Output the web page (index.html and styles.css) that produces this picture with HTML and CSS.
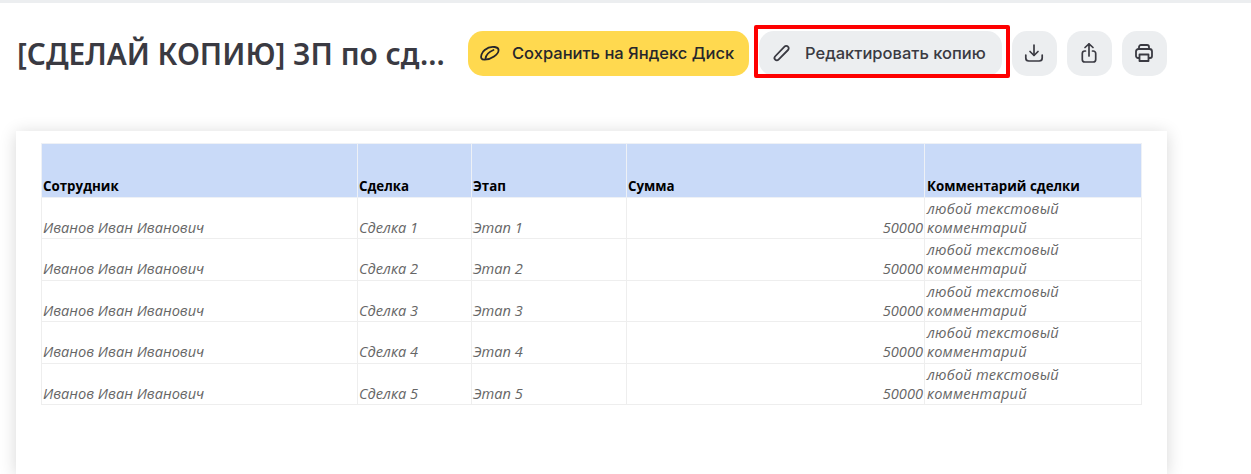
FILE: index.html
```html
<!DOCTYPE html>
<html lang="ru">
<head>
<meta charset="utf-8">
<title>Документ</title>
<link rel="stylesheet" href="styles.css">
</head>
<body>
<div class="topline"></div>
<header class="bar">
  <h1 class="title">[СДЕЛАЙ КОПИЮ] ЗП по сд...</h1>
  <div class="actions">
    <button class="btn btn-yellow">
      <svg class="ico-disk" width="24" height="24" viewBox="0 0 24 24" fill="none" stroke="#26262b" stroke-width="1.8" stroke-linecap="round" stroke-linejoin="round"><path d="M3.500 17.500c-1.200-2 .2-6 3.200-8.500 3-2.500 7-3.500 10-3 2 .3 3.500 1.200 3.800 2.500.4 2-1.500 5-4.500 7-3.200 2.200-7 3.300-9.800 3.200-1.200 0-2.200-.4-2.700-1.200z"/><path d="M7.500 17.500c.5-3 3-6.500 8-8.500"/></svg>
      <span>Сохранить на Яндекс Диск</span>
    </button>
    <button class="btn btn-grey btn-edit">
      <svg width="20" height="20" viewBox="0 0 20 20" fill="none" stroke="#3a3a42" stroke-width="1.8" stroke-linecap="round" stroke-linejoin="round"><path d="M3 13.500 12.500 3.600a2.400 2.400 0 0 1 3.500 0 2.400 2.400 0 0 1 0 3.400L6.500 16.600a2.300 2.300 0 0 1-3.300 0 2.300 2.300 0 0 1-.2-3.100z"/></svg>
      <span>Редактировать копию</span>
    </button>
    <button class="btn btn-grey btn-icon" aria-label="Скачать">
      <svg width="20" height="20" viewBox="0 0 20 20" fill="none" stroke="#3a3a42" stroke-width="1.7" stroke-linecap="round" stroke-linejoin="round"><path d="M10 2v10"/><path d="M6 8.500l4 4 4-4"/><path d="M1.800 12v3a3 3 0 0 0 3 3h10.400a3 3 0 0 0 3-3v-3"/></svg>
    </button>
    <button class="btn btn-grey btn-icon" aria-label="Поделиться">
      <svg width="20" height="22" viewBox="0 0 20 22" fill="none" stroke="#3a3a42" stroke-width="1.7" stroke-linecap="round" stroke-linejoin="round"><path d="M10 14V2"/><path d="M6 5.500 10 1.800l4 3.700"/><path d="M6.500 9H5.800a2.500 2.500 0 0 0-2.500 2.500v6A2.500 2.500 0 0 0 5.800 20h8.400a2.500 2.500 0 0 0 2.500-2.500v-6A2.500 2.500 0 0 0 14.200 9h-.7"/></svg>
    </button>
    <button class="btn btn-grey btn-icon" aria-label="Печать">
      <svg width="20" height="20" viewBox="0 0 20 20" fill="none" stroke="#3a3a42" stroke-width="1.8" stroke-linecap="round" stroke-linejoin="round"><path d="M5 6V4a2 2 0 0 1 2-2h6a2 2 0 0 1 2 2v2"/><path d="M5 15H4a2 2 0 0 1-2-2V8.500A2.500 2.500 0 0 1 4.500 6h11A2.500 2.500 0 0 1 18 8.500V13a2 2 0 0 1-2 2h-1"/><path d="M5.500 11.500h9V18h-9z"/></svg>
    </button>
  </div>
</header>
<main class="sheet">
  <table class="grid">
    <colgroup>
      <col class="c1"><col class="c2"><col class="c3"><col class="c4"><col class="c5">
    </colgroup>
    <thead>
      <tr><th>Сотрудник</th><th>Сделка</th><th>Этап</th><th>Сумма</th><th class="note">Комментарий сделки</th></tr>
    </thead>
    <tbody>
      <tr class="r1"><td>Иванов Иван Иванович</td><td>Сделка 1</td><td>Этап 1</td><td class="num">50000</td><td class="note">любой текстовый комментарий</td></tr>
      <tr class="r2"><td>Иванов Иван Иванович</td><td>Сделка 2</td><td>Этап 2</td><td class="num">50000</td><td class="note">любой текстовый комментарий</td></tr>
      <tr class="r1"><td>Иванов Иван Иванович</td><td>Сделка 3</td><td>Этап 3</td><td class="num">50000</td><td class="note">любой текстовый комментарий</td></tr>
      <tr class="r2"><td>Иванов Иван Иванович</td><td>Сделка 4</td><td>Этап 4</td><td class="num">50000</td><td class="note">любой текстовый комментарий</td></tr>
      <tr class="r1"><td>Иванов Иван Иванович</td><td>Сделка 5</td><td>Этап 5</td><td class="num">50000</td><td class="note">любой текстовый комментарий</td></tr>
    </tbody>
  </table>
</main>
</body>
</html>
```

FILE: styles.css
```css
html, body {
  margin: 0;
  height: 474px;
  overflow: hidden;
  background: #fff;
}
.topline {
  height: 3px;
  background: #eceef0;
}
.bar {
  display: flex;
  align-items: center;
  height: 45px;
  margin-top: 28px;
  padding-left: 17px;
}
.title {
  width: 451px;
  margin: 0;
  font: 600 29.8px/36px "Noto Sans", sans-serif;
  color: #3a3a42;
  white-space: nowrap;
}
.actions {
  display: flex;
  gap: 10px;
}
.btn {
  display: flex;
  align-items: center;
  box-sizing: border-box;
  height: 45px;
  border: 0;
  padding: 0 0 2px;
  border-radius: 15px;
  font: 500 16.5px/20px Inter, "Noto Sans", sans-serif;
  white-space: nowrap;
}
.btn-yellow {
  width: 281px;
  gap: 10px;
  padding-left: 10px;
  background: #ffd94f;
  color: #26262b;
}
.btn-grey {
  background: #eceef0;
  color: #3a3a42;
}
.btn-edit {
  position: relative;
  width: 243px;
  gap: 13px;
  padding-left: 13px;
}
.btn-edit::after {
  content: "";
  position: absolute;
  left: -5px;
  right: -8px;
  top: -6px;
  bottom: -2px;
  border: 4px solid #fe0000;
  border-radius: 2px;
}
.btn-icon {
  width: 45px;
  justify-content: center;
  padding-right: 2px;
}
.sheet {
  width: 1151px;
  height: 343px;
  margin: 55px 0 0 16px;
  padding: 12px 0 0 25px;
  box-sizing: border-box;
  background: #fff;
  box-shadow: 0 2px 16px rgba(0, 0, 0, 0.16);
}
.grid {
  table-layout: fixed;
  border-collapse: collapse;
  width: 1101px;
  font: 14.6px/19px "Open Sans", sans-serif;
}
.c1 { width: 316px; }
.c2 { width: 114px; }
.c3 { width: 155px; }
.c4 { width: 298px; }
.c5 { width: 217px; }
th, td {
  padding: 0 1px;
  vertical-align: bottom;
  text-align: left;
  overflow: hidden;
}
th {
  height: 54px;
  padding-bottom: 1px;
  box-sizing: border-box;
  background: #c9daf8;
  border: 1px solid #eef1f6;
  font-size: 13.33px;
  font-weight: 700;
  color: #000;
}
td {
  border: 1px solid #eeeeee;
  font-style: italic;
  color: #666;
}
.r1 td { height: 39px; padding-bottom: 1px; }
.r2 td { height: 39px; padding-bottom: 2px; }
td.num { text-align: right; }
th.note { padding-left: 2px; }
td.note { padding-left: 2px; letter-spacing: 0.2px; }
```
